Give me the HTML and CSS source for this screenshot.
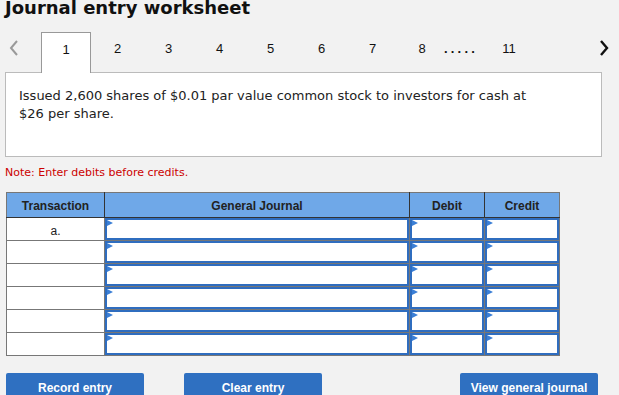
FILE: index.html
```html
<!DOCTYPE html>
<html lang="en">
<head>
    <meta charset="UTF-8">
    <title>Journal entry worksheet</title>
    <link rel="stylesheet" href="styles.css">
</head>
<body>
    <h1 class="title">Journal entry worksheet</h1>

    <div class="tabs">
        <span class="arrow arrow-prev">
            <svg width="10" height="16" viewBox="0 0 10 16"><path d="M8 1 L2 8 L8 15" fill="none" stroke="#9a9a9a" stroke-width="2"/></svg>
        </span>
        <span class="tab active">1</span>
        <span class="tab">2</span>
        <span class="tab">3</span>
        <span class="tab">4</span>
        <span class="tab">5</span>
        <span class="tab">6</span>
        <span class="tab">7</span>
        <span class="tab tab-8">8</span>
        <span class="dots">.....</span>
        <span class="tab tab-11">11</span>
        <span class="arrow arrow-next">
            <svg width="10" height="16" viewBox="0 0 10 16"><path d="M2 1 L8 8 L2 15" fill="none" stroke="#111" stroke-width="2.4"/></svg>
        </span>
    </div>

    <div class="question">
        Issued 2,600 shares of $0.01 par value common stock to investors for cash at $26 per share.
    </div>

    <p class="note">Note: Enter debits before credits.</p>

    <table class="journal">
        <thead>
            <tr>
                <th class="col-trans">Transaction</th>
                <th class="col-gj">General Journal</th>
                <th class="col-num">Debit</th>
                <th class="col-num">Credit</th>
            </tr>
        </thead>
        <tbody>
            <tr>
                <td class="trans">a.</td>
                <td><div class="field"></div></td>
                <td><div class="field"></div></td>
                <td><div class="field"></div></td>
            </tr>
            <tr>
                <td class="trans"></td>
                <td><div class="field"></div></td>
                <td><div class="field"></div></td>
                <td><div class="field"></div></td>
            </tr>
            <tr>
                <td class="trans"></td>
                <td><div class="field"></div></td>
                <td><div class="field"></div></td>
                <td><div class="field"></div></td>
            </tr>
            <tr>
                <td class="trans"></td>
                <td><div class="field"></div></td>
                <td><div class="field"></div></td>
                <td><div class="field"></div></td>
            </tr>
            <tr>
                <td class="trans"></td>
                <td><div class="field"></div></td>
                <td><div class="field"></div></td>
                <td><div class="field"></div></td>
            </tr>
            <tr>
                <td class="trans"></td>
                <td><div class="field"></div></td>
                <td><div class="field"></div></td>
                <td><div class="field"></div></td>
            </tr>
        </tbody>
    </table>

    <div class="actions">
        <button class="btn">Record entry</button>
        <button class="btn btn-clear">Clear entry</button>
        <button class="btn btn-view">View general journal</button>
    </div>
</body>
</html>
```

FILE: styles.css
```css
*{
    margin: 0px;
    padding: 0px;
    box-sizing: border-box;
}
body{
    background-color: #f2f2f2;
    color: #222;
    font-family: "DejaVu Sans", Verdana, sans-serif;
    overflow: hidden;
}
.title{
    font-size: 18px;
    font-weight: bold;
    line-height: 18px;
    margin-top: -1px;
    padding-left: 5px;
    color: #111;
}
/* barra de abas */
.tabs{
    display: flex;
    align-items: stretch;
    height: 40px;
    margin-top: 15px;
    padding-left: 5px;
    font-family: "Liberation Sans", Arial, sans-serif;
    font-size: 13px;
    color: #111;
}
.arrow{
    display: flex;
    align-items: center;
    padding-bottom: 9px;
}
.arrow-prev{
    width: 36px;
    padding-left: 4px;
}
.arrow-next{
    margin-left: auto;
    margin-right: 10px;
}
.tab{
    width: 51px;
    display: flex;
    align-items: center;
    justify-content: center;
    padding-bottom: 8px;
}
.tab.active{
    width: 50px;
    margin-right: 1px;
    background-color: #fff;
    border: 1px solid #999;
    border-bottom: none;
    position: relative;
    z-index: 1;
    margin-bottom: -1px;
}
.tab-8{
    width: 36px;
    padding-left: 12px;
}
.dots{
    display: flex;
    align-items: center;
    padding-left: 10px;
    padding-bottom: 8px;
    width: 50px;
    font-weight: bold;
    letter-spacing: 3.2px;
}
.tab-11{
    width: 50px;
}
.question{
    width: 597px;
    height: 85px;
    margin-left: 5px;
    background-color: #fff;
    border: 1px solid #bbb;
    padding: 14px 60px 14px 13px;
    font-size: 13px;
    line-height: 18px;
    color: #222;
}
.note{
    margin: 9px 0 0 5px;
    font-size: 11px;
    line-height: 14px;
    color: #cc0000;
}
/* tabela */
.journal{
    margin: 12px 0 0 6px;
    border-collapse: collapse;
    font-family: "Liberation Sans", Arial, sans-serif;
    font-size: 12px;
    border: 1px solid #777;
}
.journal th{
    height: 25px;
    padding-top: 2px;
    background-color: #6fa8e8;
    font-weight: bold;
    color: #222;
    border: 1px solid #333;
    border-top-color: #777;
}
.journal th:first-child{
    border-left-color: #777;
}
.journal th:last-child{
    border-right-color: #777;
}
.col-trans{
    width: 98px;
}
.col-gj{
    width: 305px;
}
.col-num{
    width: 75px;
}
.journal td{
    height: 23px;
    border: 1px solid #777;
    background-color: #fff;
    padding: 0px;
}
.journal td.trans{
    text-align: center;
    vertical-align: top;
    padding-top: 6px;
}
.field{
    height: 22px;
    border: 2px solid #2f6dbf;
    position: relative;
}
.field::before{
    content: "";
    position: absolute;
    left: 0px;
    top: 0px;
    border-left: 6px solid #3b7fd6;
    border-top: 3px solid transparent;
    border-bottom: 3px solid transparent;
}
.actions{
    display: flex;
    margin: 17px 0 0 6px;
}
.btn{
    width: 138px;
    height: 30px;
    border: none;
    border-radius: 2px;
    background-color: #2f70c1;
    color: #fff;
    font-family: "Liberation Sans", Arial, sans-serif;
    font-weight: bold;
    font-size: 12px;
}
.btn-clear{
    margin-left: 40px;
}
.btn-view{
    margin-left: 138px;
}
```
